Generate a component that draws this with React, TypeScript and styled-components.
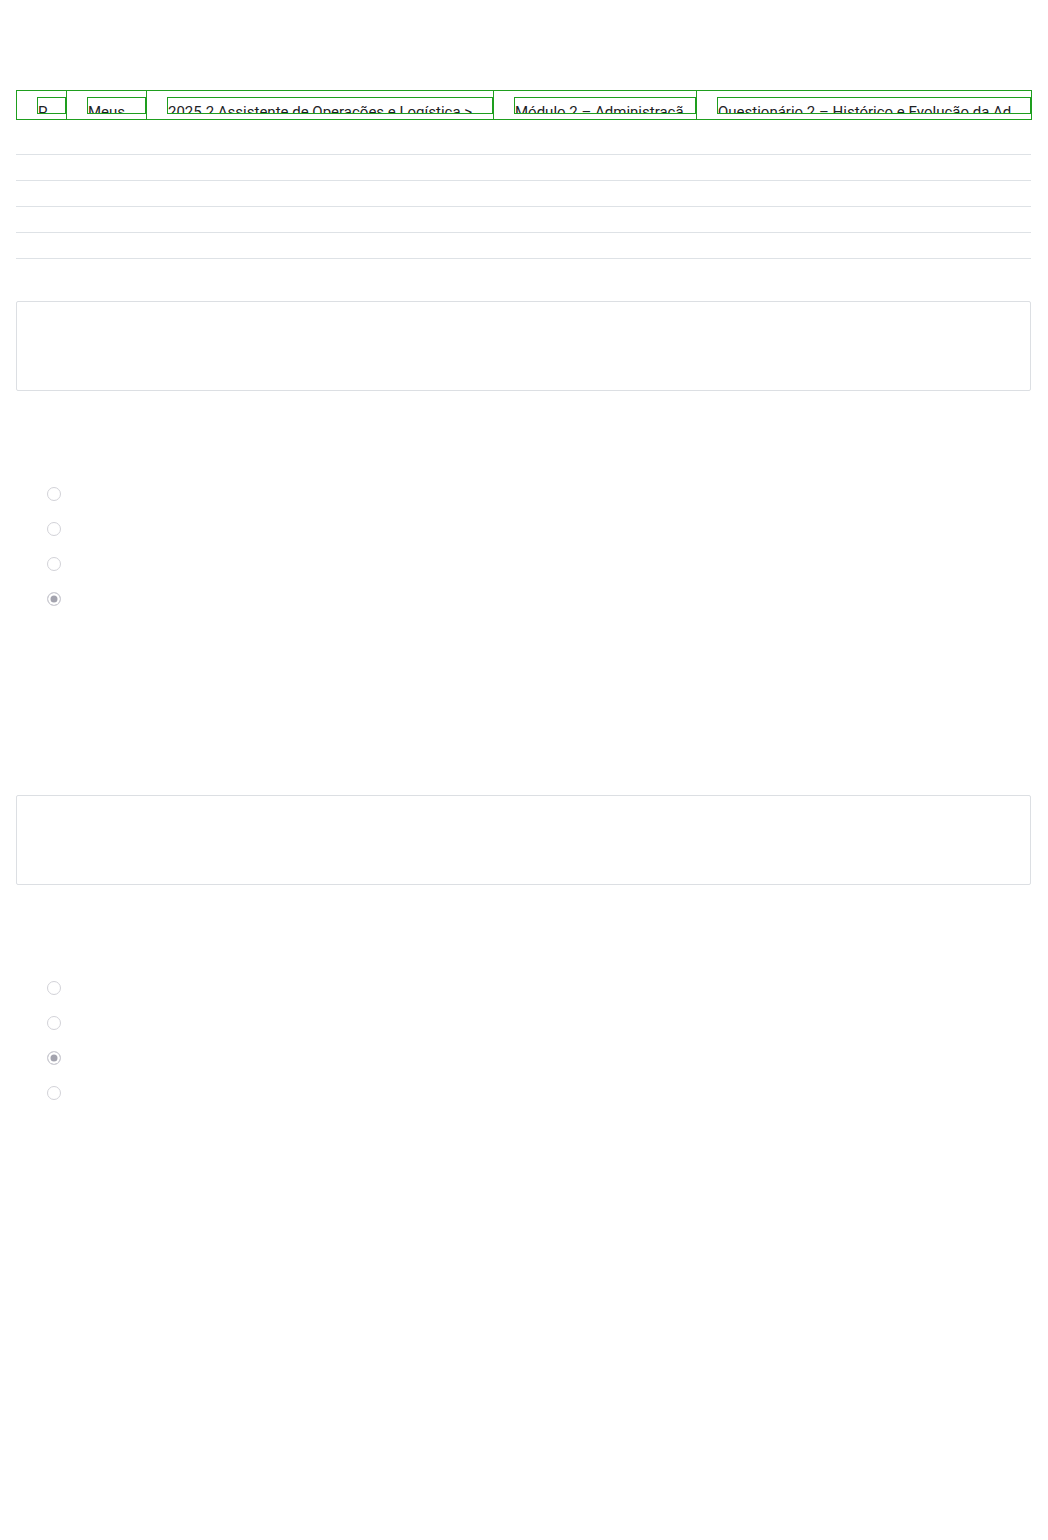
import styled, { createGlobalStyle } from "styled-components";

const GlobalStyle = createGlobalStyle`
  body {
    margin: 0;
    background: #fff;
    font-family: Roboto, "Noto Sans", "Liberation Sans", sans-serif;
    color: #1d2125;
  }
`;

const crumbs = [
    { label: "Painel", width: 50 },
    { label: "Meus cursos", width: 80 },
    { label: "2025.2 Assistente de Operações e Logística > Turma 01", width: 347 },
    { label: "Módulo 2 – Administração e Gestão", width: 203 },
    { label: "Questionário 2 – Histórico e Evolução da Administração", width: 336 },
];

const questions = [
    { checked: 3 },
    { checked: 2 },
];

export default function App() {
    return (
        <>
            <GlobalStyle />
            <Page>
                <Breadcrumb>
                    {crumbs.map((item, index) => (
                        <Crumb key={index} $width={item.width}>
                            <CrumbLink href="#">{item.label}</CrumbLink>
                        </Crumb>
                    ))}
                </Breadcrumb>

                <SummaryTable>
                    <tbody>
                        {[0, 1, 2, 3].map((row) => (
                            <SummaryRow key={row}>
                                <SummaryCell />
                            </SummaryRow>
                        ))}
                    </tbody>
                </SummaryTable>

                <Questions>
                    {questions.map((q, qi) => (
                        <Question key={qi}>
                            <QuestionText />
                            <Answers>
                                {[0, 1, 2, 3].map((opt) => (
                                    <Radio
                                        key={opt}
                                        type="radio"
                                        name={`q${qi}`}
                                        disabled
                                        defaultChecked={opt === q.checked}
                                    />
                                ))}
                            </Answers>
                        </Question>
                    ))}
                </Questions>
            </Page>
        </>
    );
}

const Page = styled.div`
  padding: 90px 16px 0;
  min-height: 1540px;
  box-sizing: border-box;
`;

const Breadcrumb = styled.nav`
  display: flex;
  width: 1016px;
`;

const Crumb = styled.div<{ $width: number }>`
  flex: 0 0 ${(p) => p.$width}px;
  width: ${(p) => p.$width}px;
  min-width: 0;
  box-sizing: border-box;
  height: 30px;
  display: flex;
  padding: 6px 0 0 20px;
  border: 1px solid #1e9e1e;
  border-right: none;

  &:last-child {
    border-right: 1px solid #1e9e1e;
  }
`;

const CrumbLink = styled.a`
  display: block;
  flex: 1 1 0;
  min-width: 0;
  box-sizing: border-box;
  height: 17px;
  padding-top: 3px;
  border: 1px solid #1e9e1e;
  color: #1d2125;
  text-decoration: none;
  font-size: 15px;
  line-height: 22px;
  white-space: nowrap;
  overflow: hidden;
  text-overflow: ellipsis;
`;

const SummaryTable = styled.table`
  width: 1015px;
  margin-top: 34px;
  border-collapse: collapse;
  border-bottom: 1px solid #dee2e6;
`;

const SummaryRow = styled.tr`
  border-top: 1px solid #dee2e6;
`;

const SummaryCell = styled.td`
  height: 25px;
  padding: 0;
`;

const Questions = styled.div`
  display: flex;
  flex-direction: column;
  gap: 189px;
  margin-top: 42px;
`;

const Question = styled.div`
  display: flex;
  flex-direction: column;
`;

const QuestionText = styled.div`
  width: 1015px;
  height: 90px;
  box-sizing: border-box;
  border: 1px solid #dcdfe3;
  border-radius: 2px;
`;

const Answers = styled.div`
  display: flex;
  flex-direction: column;
  gap: 21px;
  margin-top: 96px;
  padding-left: 31px;
`;

const Radio = styled.input`
  appearance: none;
  box-sizing: border-box;
  width: 14px;
  height: 14px;
  margin: 0;
  border: 1px solid #d2d2d8;
  border-radius: 50%;
  background: #fff;

  &:checked {
    border-color: #cfcfd6;
    background: #a3a3ae;
    box-shadow: inset 0 0 0 2.5px #fff;
  }
`;
